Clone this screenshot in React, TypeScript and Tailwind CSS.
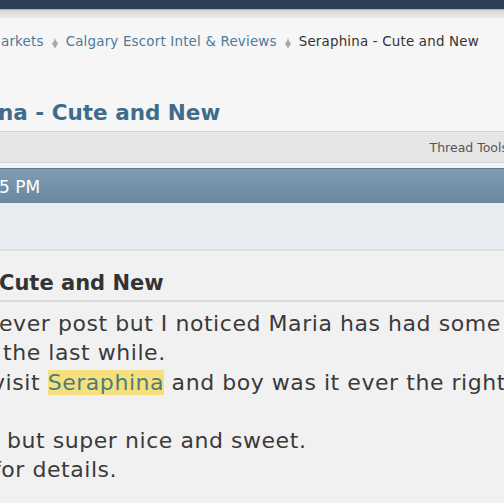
export default function App() {
  const font = { fontFamily: '"DejaVu Sans", Verdana, sans-serif' }
  return (
    <div className="w-[504px] h-[503px] overflow-hidden bg-[#f6f6f6]" style={font}>
      {/* top nav strip */}
      <div className="h-[9px] bg-[#2c3f55]" />
      <div className="h-[1px] bg-[#a9b3bd]" />
      <div className="h-[8px] bg-gradient-to-b from-[#d6d6d6] to-[#ececec]" />

      {/* breadcrumb */}
      <div className="h-[38px] flex items-end whitespace-nowrap text-[13.4px] leading-[20px] pb-[4px] ml-[1px]">
        <span className="text-[#4d7a9b] tracking-[0.2px]">arkets</span>
        <Sep />
        <span className="text-[#4d7a9b] tracking-[0.2px]">Calgary Escort Intel &amp; Reviews</span>
        <Sep />
        <span className="text-[#333] tracking-[0.2px]">Seraphina - Cute and New</span>
      </div>

      {/* thread title */}
      <div className="h-[75px] flex items-center pt-[40px] whitespace-nowrap">
        <h1 className="text-[21.5px] font-bold text-[#3f6b8c] -ml-[2px]">na - Cute and New</h1>
      </div>

      {/* thread tools */}
      <div className="h-[32px] border-y border-[#d2d2d2] bg-[#e6e6e6] flex items-center justify-end whitespace-nowrap pt-[3px]">
        <span className="text-[12.5px] text-[#555] -mr-[4px]">Thread Tools</span>
      </div>

      <div className="h-[5px] bg-[#f3f4f6]" />

      {/* post header */}
      <div className="h-[35px] border-t border-[#5c7891] border-b border-b-[#6c889f] bg-gradient-to-b from-[#7f9eb6] to-[#6a879f] flex items-center pt-[4px]">
        <span className="text-white text-[17px] -ml-[1px]">5 PM</span>
      </div>

      {/* user info strip */}
      <div className="h-[48px] bg-[#e8ebef] border-b-2 border-[#e0e0e0]" />

      {/* post body */}
      <div className="bg-[#f1f1f1] h-[260px]">
        <div className="h-[51px] flex items-center border-b-2 border-[#d9d9d9] pt-[17px]">
          <h2 className="text-[21px] font-bold text-[#333] -ml-[1px] whitespace-nowrap">Cute and New</h2>
        </div>
        <div className="text-[22px] tracking-[0.55px] leading-[29.3px] text-[#3a3a3a] whitespace-nowrap pt-[7px]">
          <div className="-ml-[1px]">ever post but I noticed Maria has had some</div>
          <div className="ml-[3px]">the last while.</div>
          <div className="-ml-[8px]">
            visit{' '}
            <span className="bg-[#f6e07e] text-[#4e7c7a]">Seraphina</span>{' '}
            and boy was it ever the right
          </div>
          <div>&nbsp;</div>
          <div className="ml-[7px]">but super nice and sweet.</div>
          <div className="-ml-[7px]">for details.</div>
        </div>
      </div>
    </div>
  )
}

function Sep() {
  return (
    <svg width="22" height="12" viewBox="0 0 22 12" className="shrink-0 mb-[2px]">
      <path d="M11 1.5 L14 5.5 L11 10.5 L8 5.5 Z" fill="#a8a8a8" />
      <path d="M11 0.5 L11 3" stroke="#a8a8a8" strokeWidth="1" />
    </svg>
  )
}
